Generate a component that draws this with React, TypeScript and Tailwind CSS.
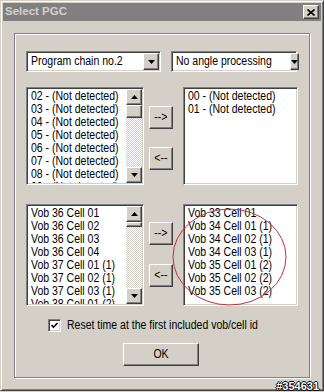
import React from 'react'

const font = "font-['Liberation_Sans',Arial,sans-serif]"

// narrow MS Sans Serif look
const T = ({ children, center }: { children: React.ReactNode; center?: boolean }) => (
    <span className={`inline-block whitespace-nowrap scale-x-[0.84] ${center ? 'origin-center' : 'origin-left'}`}>
        {children}
    </span>
)

const raised = "border border-t-white border-l-white border-r-[#404040] border-b-[#404040] shadow-[inset_-1px_-1px_0_#808080] bg-[#d4d0c8]"
const sunken = "border border-t-[#808080] border-l-[#808080] border-r-white border-b-white shadow-[inset_1px_1px_0_#404040,inset_-1px_-1px_0_#d4d0c8]"

const Arrow = ({ up }: { up?: boolean }) => (
    <svg width="7" height="4" viewBox="0 0 7 4">
        <polygon points={up ? '3.5,0 7,4 0,4' : '0,0 7,0 3.5,4'} fill="#000" />
    </svg>
)

const Combo = ({ text, w }: { text: string; w: string }) => (
    <div className={`${sunken} ${w} h-[21px] bg-white flex items-stretch p-[1px]`}>
        <div className="flex-1 flex items-center pl-[3px] text-[12.5px] text-black">
            <T>{text}</T>
        </div>
        <div className={`${raised} w-[16px] flex items-center justify-center`}>
            <Arrow />
        </div>
    </div>
)

const ListBox = ({ items, w, h, scroll, thumb }: { items: string[]; w: string; h: string; scroll?: boolean; thumb?: string }) => (
    <div className={`${sunken} ${w} ${h} bg-white flex p-[1px] overflow-hidden`}>
        <div className="flex-1 overflow-hidden pl-[3px] pt-[1px] text-[12.5px] leading-[13px] text-black">
            {items.map((it) => (
                <div key={it} className="h-[13px]">
                    <T>{it}</T>
                </div>
            ))}
        </div>
        {scroll && (
            <div className="w-[16px] flex flex-col bg-[repeating-conic-gradient(#ffffff_0_25%,#d4d0c8_0_50%)] bg-[length:2px_2px]">
                <div className={`${raised} h-[16px] flex items-center justify-center`}>
                    <Arrow up />
                </div>
                <div className={`${raised} ${thumb}`}></div>
                <div className="flex-1"></div>
                <div className={`${raised} h-[16px] flex items-center justify-center`}>
                    <Arrow />
                </div>
            </div>
        )}
    </div>
)

const Btn = ({ label, cls }: { label: string; cls: string }) => (
    <div className={`${raised} ${cls} flex items-center justify-center text-[12.5px] text-black`}>
        <T center>{label}</T>
    </div>
)

const topLeft = ['02', '03', '04', '05', '06', '07', '08', '09'].map((n) => `${n} - (Not detected)`)
const topRight = ['00 - (Not detected)', '01 - (Not detected)']
const bottomLeft = [
    'Vob 36 Cell 01',
    'Vob 36 Cell 02',
    'Vob 36 Cell 03',
    'Vob 36 Cell 04',
    'Vob 37 Cell 01 (1)',
    'Vob 37 Cell 02 (1)',
    'Vob 37 Cell 03 (1)',
    'Vob 38 Cell 01 (2)',
]
const bottomRight = [
    'Vob 33 Cell 01',
    'Vob 34 Cell 01 (1)',
    'Vob 34 Cell 02 (1)',
    'Vob 34 Cell 03 (1)',
    'Vob 35 Cell 01 (2)',
    'Vob 35 Cell 02 (2)',
    'Vob 35 Cell 03 (2)',
]

export default function App() {
    return (
        <div className={`relative w-[324px] h-[392px] overflow-hidden bg-[#d4d0c8] ${font}`}>
            {/* window frame */}
            <div className="h-[391px] border border-t-[#d4d0c8] border-l-[#d4d0c8] border-r-[#404040] border-b-[#404040] shadow-[inset_1px_1px_0_white,inset_-1px_-1px_0_#808080] p-[2px]">
                {/* title bar */}
                <div className="h-[18px] bg-[#808080] flex items-center justify-between">
                    <span className="pl-[2px] text-[11.5px] font-bold text-[#d4d0c8]">Select PGC</span>
                    <div className={`${raised} w-[16px] h-[14px] mr-[2px] flex items-center justify-center`}>
                        <svg width="8" height="7" viewBox="0 0 8 7">
                            <path d="M0.5 0.5 L7.5 6.5 M7.5 0.5 L0.5 6.5" stroke="#000" strokeWidth="1.6" />
                        </svg>
                    </div>
                </div>

                {/* group box */}
                <div className="ml-[11px] mt-[12px] w-[296px] h-[345px] border border-[#808080] shadow-[inset_1px_1px_0_white,1px_1px_0_white] pl-[11px] pt-[17px]">
                    <div className="flex gap-[10px]">
                        <Combo text="Program chain no.2" w="w-[135px]" />
                        <Combo text="No angle processing" w="w-[126px]" />
                    </div>

                    <div className="flex mt-[15px]">
                        <ListBox items={topLeft} w="w-[118px]" h="h-[98px]" scroll thumb="h-[13px]" />
                        <div className="ml-[5px] mr-[10px] w-[24px] pt-[19px] flex flex-col">
                            <Btn label="-->" cls="h-[23px]" />
                            <Btn label="<--" cls="h-[23px] mt-[18px]" />
                        </div>
                        <ListBox items={topRight} w="w-[115px]" h="h-[98px]" />
                    </div>

                    <div className="flex mt-[19px]">
                        <ListBox items={bottomLeft} w="w-[118px]" h="h-[102px]" scroll thumb="h-[5px]" />
                        <div className="ml-[5px] mr-[10px] w-[24px] pt-[18px] flex flex-col">
                            <Btn label="-->" cls="h-[23px]" />
                            <Btn label="<--" cls="h-[23px] mt-[19px]" />
                        </div>
                        <ListBox items={bottomRight} w="w-[115px]" h="h-[102px]" />
                    </div>

                    <div className="flex items-center mt-[13px] ml-[22px] h-[13px]">
                        <div className={`${sunken} w-[13px] h-[13px] bg-white flex items-center justify-center`}>
                            <svg width="7" height="7" viewBox="0 0 7 7">
                                <path d="M0.5 3 L2.5 5.2 L6.5 1" stroke="#000" strokeWidth="1.6" fill="none" />
                            </svg>
                        </div>
                        <span className="ml-[6px] text-[12.5px] text-black">
                            <T>Reset time at the first included vob/cell id</T>
                        </span>
                    </div>

                    <Btn label="OK" cls="ml-[97px] mt-[11px] w-[76px] h-[23px]" />
                </div>
            </div>

            {/* red annotation circle */}
            <svg className="absolute inset-0 pointer-events-none" width="324" height="392">
                <ellipse cx="229.5" cy="257" rx="56.5" ry="48" fill="none" stroke="#c0303a" strokeWidth="1" />
            </svg>

            {/* watermark */}
            <span className="absolute right-[5px] bottom-[0px] text-[11px] leading-[12px] font-bold text-white [text-shadow:1px_0_0_#000,-1px_0_0_#000,0_1px_0_#000,0_-1px_0_#000]">
                #354631
            </span>
        </div>
    )
}
